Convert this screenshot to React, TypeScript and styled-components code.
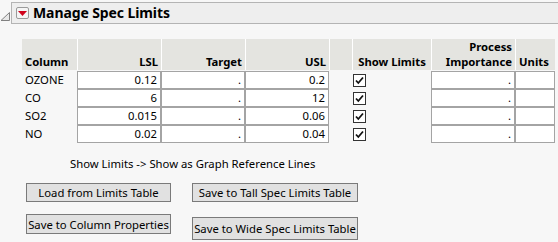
import React from 'react';
import styled, { createGlobalStyle } from 'styled-components';

const GlobalStyle = createGlobalStyle`
  body {
    margin: 0;
    background: #f7f7f7;
    font-family: "Noto Sans", "Liberation Sans", sans-serif;
    font-size: 11.3px;
    color: #000;
  }
`;

interface Row {
    name: string;
    lsl: string;
    usl: string;
}

const rows: Row[] = [
    { name: 'OZONE', lsl: '0.12', usl: '0.2' },
    { name: 'CO', lsl: '6', usl: '12' },
    { name: 'SO2', lsl: '0.015', usl: '0.06' },
    { name: 'NO', lsl: '0.02', usl: '0.04' },
];

const Check: React.FC = () => (
    <CheckBox>
        <svg width="11" height="11" viewBox="0 0 11 11">
            <path d="M2 5.5 L4.3 8 L9 2.5" fill="none" stroke="#111" strokeWidth="1.8" />
        </svg>
    </CheckBox>
);

const App: React.FC = () => {
    return (
        <Page>
            <GlobalStyle />
            <TitleRow>
                <Disclosure>
                    <svg width="10" height="9" viewBox="0 0 10 9">
                        <path d="M1 8.5 L9.5 8.5 L9.5 0.5 Z" fill="#e8e8e8" stroke="#808080" strokeWidth="1" />
                    </svg>
                </Disclosure>
                <TitleBar>
                    <RedButton>
                        <svg width="9" height="5" viewBox="0 0 9 5">
                            <path d="M0 0 L9 0 L4.5 5 Z" fill="#d0021b" />
                        </svg>
                    </RedButton>
                    <Title>Manage Spec Limits</Title>
                </TitleBar>
            </TitleRow>

            <Grid>
                <HeadCell $align="left">Column</HeadCell>
                <HeadCell>LSL</HeadCell>
                <HeadCell>Target</HeadCell>
                <HeadCell>USL</HeadCell>
                <HeadCell />
                <HeadCell $align="center">Show Limits</HeadCell>
                <HeadCell>Process<br />Importance</HeadCell>
                <HeadCell $align="left">Units</HeadCell>

                {rows.map((r) => (
                    <React.Fragment key={r.name}>
                        <NameCell>{r.name}</NameCell>
                        <InputCell>{r.lsl}</InputCell>
                        <InputCell>.</InputCell>
                        <InputCell>{r.usl}</InputCell>
                        <Blank />
                        <CheckCell><Check /></CheckCell>
                        <InputCell>.</InputCell>
                        <InputCell />
                    </React.Fragment>
                ))}
            </Grid>

            <Note>Show Limits -&gt; Show as Graph Reference Lines</Note>

            <Buttons>
                <ButtonStack $gap={12}>
                    <Button $width={145} $height={19}>Load from Limits Table</Button>
                    <Button $width={145} $height={20}>Save to Column Properties</Button>
                </ButtonStack>
                <ButtonStack $gap={15}>
                    <Button $width={166} $height={19}>Save to Tall Spec Limits Table</Button>
                    <Button $width={166} $height={23}>Save to Wide Spec Limits Table</Button>
                </ButtonStack>
            </Buttons>
        </Page>
    );
};

export default App;

const Page = styled.div`
  width: 558px;
  height: 242px;
  overflow: hidden;
  padding-top: 2px;
  box-sizing: border-box;
`;

const TitleRow = styled.div`
  display: flex;
  align-items: flex-start;
`;

const Disclosure = styled.div`
  width: 11px;
  height: 22px;
  display: flex;
  align-items: flex-start;
  padding-top: 10px;
  box-sizing: border-box;
`;

const TitleBar = styled.div`
  flex: 1;
  height: 22px;
  margin-right: -4px;
  display: flex;
  align-items: center;
  background: #eeeeee;
  border: 1px solid #b4b4b4;
  box-sizing: border-box;
  padding-left: 4px;
`;

const RedButton = styled.div`
  width: 13px;
  height: 12px;
  box-sizing: border-box;
  border: 1px solid #9a9a9a;
  border-radius: 2px;
  background: #f4f4f4;
  display: flex;
  align-items: center;
  justify-content: center;
`;

const Title = styled.div`
  font-weight: bold;
  font-size: 14px;
  margin-left: 4px;
  line-height: 20px;
  letter-spacing: -0.1px;
`;

const Grid = styled.div`
  display: grid;
  grid-template-columns: 55px 84px 84px 84px 23px 79px 84px 40px;
  grid-template-rows: 32px repeat(4, 18px);
  margin: 15px 0 0 22px;
`;

const HeadCell = styled.div<{ $align?: 'left' | 'right' | 'center' }>`
  background: #e4e4e0;
  border-left: 1px solid #ffffff;
  &:first-child { border-left: none; }
  font-weight: bold;
  line-height: 15px;
  display: flex;
  flex-direction: column;
  justify-content: flex-end;
  text-align: ${(p) => p.$align || 'right'};
  padding: 0 3px 1px 3px;
  box-sizing: border-box;
  margin-bottom: 1px;
  white-space: nowrap;
`;

const NameCell = styled.div`
  padding-left: 3px;
  line-height: 18px;
`;

const InputCell = styled.div`
  background: #ffffff;
  border: 1px solid #a4a4a4;
  box-sizing: border-box;
  text-align: right;
  padding-right: 3px;
  line-height: 16px;
`;

const Blank = styled.div``;

const CheckCell = styled.div`
  display: flex;
  align-items: center;
  padding-left: 1px;
`;

const CheckBox = styled.div`
  width: 13px;
  height: 13px;
  box-sizing: border-box;
  border: 1px solid #333333;
  background: #ffffff;
  display: flex;
  align-items: center;
  justify-content: center;
`;

const Note = styled.div`
  margin: 13px 0 0 70px;
  line-height: 16px;
`;

const Buttons = styled.div`
  display: flex;
  gap: 21px;
  margin: 11px 0 0 26px;
`;

const ButtonStack = styled.div<{ $gap: number }>`
  display: flex;
  flex-direction: column;
  gap: ${(p) => p.$gap}px;
`;

const Button = styled.button<{ $width: number; $height: number }>`
  width: ${(p) => p.$width}px;
  height: ${(p) => p.$height}px;
  background: #e1e1e1;
  border: 1px solid #7a7a7a;
  border-radius: 0;
  padding: 0;
  font-family: "Noto Sans", "Liberation Sans", sans-serif;
  font-size: 11.3px;
  color: #000;
  white-space: nowrap;
`;
